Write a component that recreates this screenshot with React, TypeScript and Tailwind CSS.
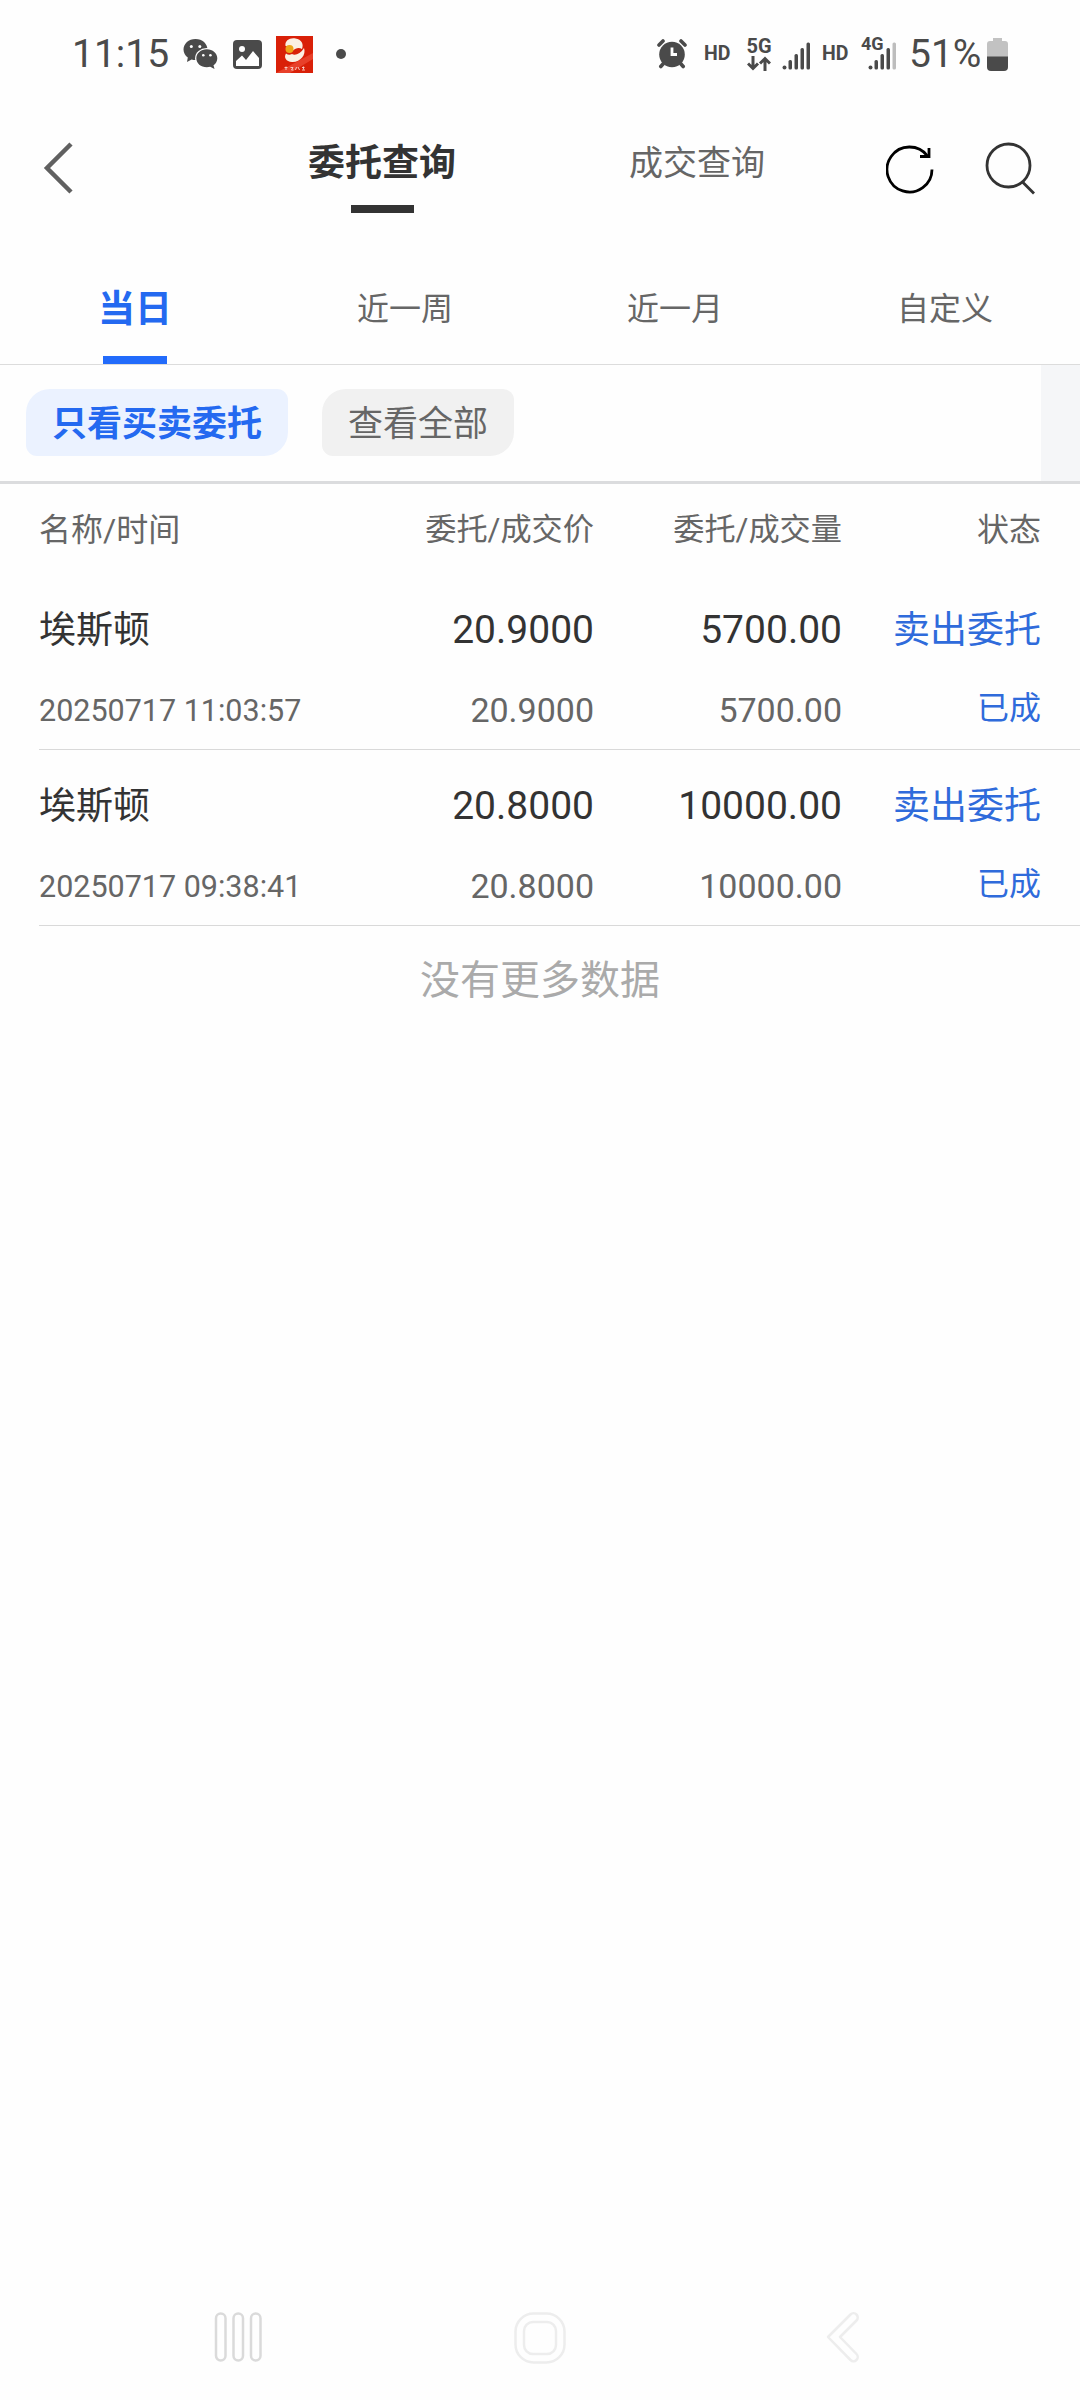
import { clsx } from 'clsx';

interface Order {
  name: string;
  time: string;
  price: string;
  dealPrice: string;
  amount: string;
  dealAmount: string;
  side: string;
  status: string;
}

const orders: Order[] = [
  {
    name: '埃斯顿',
    time: '20250717 11:03:57',
    price: '20.9000',
    dealPrice: '20.9000',
    amount: '5700.00',
    dealAmount: '5700.00',
    side: '卖出委托',
    status: '已成',
  },
  {
    name: '埃斯顿',
    time: '20250717 09:38:41',
    price: '20.8000',
    dealPrice: '20.8000',
    amount: '10000.00',
    dealAmount: '10000.00',
    side: '卖出委托',
    status: '已成',
  },
];

const ranges = ['当日', '近一周', '近一月', '自定义'];

function WeChatIcon() {
  return (
    <svg className="ml-[13px]" width="36" height="30" viewBox="0 0 36 30" fill="#4a4a4a">
      <path d="M12.5 0C5.600 0 0.500 4.700 0.500 10.500c0 3.300 1.700 6.100 4.300 8.100L4 23l4.600-2.600c1.300.4 2.600.6 3.900.6 6.900 0 12-4.700 12-10.500S19.400 0 12.500 0z" />
      <ellipse cx="23.800" cy="19.300" rx="11.700" ry="10.200" fill="#fff" />
      <path d="M23.800 10.200c-6 0-10.500 4-10.500 9s4.500 9 10.500 9c1.200 0 2.400-.2 3.400-.5l4.300 2.300-1-3.700c2.400-1.700 3.800-4.200 3.800-7.100 0-5-4.500-9-10.500-9z" />
      <circle cx="8.300" cy="7.500" r="1.500" fill="#fff" />
      <circle cx="16.800" cy="7.500" r="1.500" fill="#fff" />
      <circle cx="20.300" cy="16.300" r="1.300" fill="#fff" />
      <circle cx="27.400" cy="16.300" r="1.300" fill="#fff" />
    </svg>
  );
}

function PhotoIcon() {
  return (
    <svg className="ml-[14px]" width="29" height="29" viewBox="0 0 29 29">
      <rect width="29" height="29" rx="4" fill="#4a4a4a" />
      <circle cx="9" cy="9" r="3" fill="#fff" />
      <path d="M3 26v-5l6-5.500 4 4.500 7-9 6 7v8z" fill="#fff" />
    </svg>
  );
}

function BrokerIcon() {
  return (
    <svg className="ml-[14px]" width="37" height="37" viewBox="0 0 37 37">
      <rect width="37" height="37" fill="#d92008" />
      <path d="M0 37L37 17v6L14 37z" fill="#e8402a" />
      <path d="M9.500 10C8.500 4.500 14 1.500 19.500 2.500c6 1 8.500 5.500 6.500 10.500-3-2-6.500-1-9 1.500C15 11 12 9.500 9.500 10z" fill="#fbf0e4" />
      <path d="M28 12c2.500 7-4 14.500-12 14-6-.5-8.500-4.500-6-8.500 2 1.500 4 1.500 6 .5 3 2 8.500 0 12-6z" fill="#fbf0e4" />
      <circle cx="13.500" cy="13" r="4" fill="#eda41b" />
      <path
        d="M8.500 31.500h3M10 30.500v3.500M14.500 31.500h2.500l-1.500 2.500h2M20.500 31l-1 3M22 31l1.500 3M26 31.500h2.500M27.500 30.500v3M26 34h3"
        stroke="#f7d5cd"
        strokeWidth="0.900"
        fill="none"
      />
    </svg>
  );
}

function AlarmIcon() {
  return (
    <svg width="30" height="30" viewBox="0 0 30 30" fill="none" stroke="#4a4a4a" strokeWidth="3.600" strokeLinecap="round">
      <circle cx="15" cy="15.500" r="12.800" fill="#4a4a4a" stroke="none" />
      <path d="M2 6l4-4M28 6l-4-4" />
      <path d="M6 25l-2.200 2.500M24 25l2.200 2.500" />
      <path d="M15 8.500v7h5" stroke="#fff" strokeWidth="2.800" strokeLinecap="butt" />
    </svg>
  );
}

function SignalBars({ weak, className }: { weak?: boolean; className?: string }) {
  return (
    <svg className={className} width="29" height="28" viewBox="0 0 29 28" fill="#4a4a4a">
      <rect x="0.500" y="23.500" width="4" height="4" rx="2" />
      <rect x="6.500" y="18" width="3.500" height="9.500" rx="1.500" />
      <rect x="12.500" y="12" width="3.500" height="15.500" rx="1.500" />
      <rect x="18.500" y="6" width="3.500" height="21.500" rx="1.500" />
      <rect x="24.500" y="0.500" width="3.500" height="27" rx="1.500" fill={weak ? '#bdbdbd' : '#4a4a4a'} />
    </svg>
  );
}

function StatusBar() {
  return (
    <header className="flex h-[108px] items-center px-[72px] text-[#4a4a4a]">
      <span className="w-[98px] text-[39px] leading-none">11:15</span>
      <WeChatIcon />
      <PhotoIcon />
      <BrokerIcon />
      <span className="ml-[23px] h-[10px] w-[10px] rounded-full bg-[#4a4a4a]" />

      <div className="ml-auto flex items-center">
        <AlarmIcon />
        <span className="ml-[17px] w-[28px] text-[19.500px] leading-none font-bold">HD</span>
        <div className="ml-[14px] flex w-[26px] flex-col items-center pt-px">
          <span className="text-[20px] leading-[16px] font-bold">5G</span>
          <svg className="mt-[2px]" width="24" height="15" viewBox="0 0 24 15" fill="none" stroke="#4a4a4a" strokeWidth="3">
            <path d="M6 0v12M1 7.500l5 5 5-5M18 15V3M13 7.500l5-5 5 5" />
          </svg>
        </div>
        <SignalBars className="mt-[3px] ml-[10px]" />
        <span className="ml-[11px] w-[29px] text-[19.500px] leading-none font-bold">HD</span>
        <div className="relative ml-[10px] h-[34px] w-[38px]">
          <SignalBars weak className="absolute right-[2px] bottom-px" />
          <span className="absolute top-0 left-0 bg-[#fefefe] pr-px text-[18px] leading-[14px] font-bold">4G</span>
        </div>
        <span className="ml-[10px] w-[78px] text-[39px] leading-none">51%</span>
        <svg width="21" height="33" viewBox="0 0 21 33">
          <path d="M6 0h9v3h3a3 3 0 0 1 3 3v13H0V6a3 3 0 0 1 3-3h3z" fill="#c2c2c2" />
          <path d="M0 18.500h21V29a4 4 0 0 1-4 4H4a4 4 0 0 1-4-4z" fill="#4a4a4a" />
        </svg>
      </div>
    </header>
  );
}

function TitleBar() {
  return (
    <nav className="flex h-[148px] items-start">
      <button type="button" aria-label="返回" className="mt-[34px] ml-[43px]">
        <svg width="31" height="52" viewBox="0 0 31 52" fill="none" stroke="#606060" strokeWidth="4.500">
          <path d="M28 2L4 26l24 24" />
        </svg>
      </button>
      <div className="ml-[234px] flex w-[148px] flex-col items-center">
        <span className="mt-[28px] text-[37px] leading-[56px] font-bold whitespace-nowrap text-[#333]">委托查询</span>
        <span className="mt-[13px] h-2 w-[63px] bg-[#333]" />
      </div>
      <span className="mt-[27px] ml-[173px] w-[136px] text-[34px] leading-[56px] whitespace-nowrap text-[#666]">成交查询</span>
      <button type="button" aria-label="刷新" className="mt-[37px] ml-[121px]">
        <svg width="49" height="50" viewBox="0 0 49 50" fill="none" stroke="#000" strokeWidth="2.800">
          <path d="M46 24.500A22.500 22.500 0 1 1 41.500 11" />
          <path d="M34 11.500h9V3" />
        </svg>
      </button>
      <button type="button" aria-label="搜索" className="mt-[34px] ml-[50px]">
        <svg width="50" height="53" viewBox="0 0 50 53" fill="none" stroke="#333" strokeWidth="2.800">
          <circle cx="23.500" cy="23.500" r="21.500" />
          <path d="M37.500 40L49 51.500" />
        </svg>
      </button>
    </nav>
  );
}

function RangeTabs() {
  return (
    <div className="grid h-[109px] grid-cols-4 border-b border-[#dcdcdc]">
      {ranges.map((label, i) => (
        <div key={label} className="flex flex-col items-center">
          <span
            className={clsx(
              'h-[56px] leading-[56px]',
              i === 0 ? 'mt-[26px] text-[37px] font-bold text-[#2469f0]' : 'mt-[25px] text-[32px] text-[#666]'
            )}
          >
            {label}
          </span>
          {i === 0 && <span className="mt-auto h-2 w-16 bg-[#226bfb]" />}
        </div>
      ))}
    </div>
  );
}

function Filters() {
  return (
    <div className="flex h-[119px] border-b-[3px] border-[#dbdcde]">
      <div className="flex flex-1 items-start gap-[34px] pt-6 pl-[26px]">
        <button
          type="button"
          className="h-[67px] w-[262px] rounded-tl-3xl rounded-tr-[11px] rounded-br-3xl rounded-bl-[11px] bg-[#ebf2ff] pt-[5px] text-[35px] leading-[62px] font-bold text-[#2469f0]"
        >
          只看买卖委托
        </button>
        <button
          type="button"
          className="h-[67px] w-[192px] rounded-tl-3xl rounded-tr-[11px] rounded-br-3xl rounded-bl-[11px] bg-[#f1f1f1] pt-[5px] text-[35px] leading-[62px] text-[#666]"
        >
          查看全部
        </button>
      </div>
      <div className="w-[39px] bg-[#f5f6f8]" />
    </div>
  );
}

function OrderRow({ order }: { order: Order }) {
  return (
    <li className="ml-[39px] grid h-[176px] grid-cols-[300px_255px_248px_199px] grid-rows-[95px_60px] border-b border-[#d9d9d9] text-right text-[#666]">
      <span className="text-left text-[37px] leading-[114px] text-[#333]">{order.name}</span>
      <span className="text-[39px] leading-[112px] text-[#333]">{order.price}</span>
      <span className="text-[39px] leading-[112px] text-[#333]">{order.amount}</span>
      <span className="text-[37px] leading-[114px] text-[#2f6bdb]">{order.side}</span>
      <span className="text-left text-[30.500px] leading-[84px]">{order.time}</span>
      <span className="text-[34px] leading-[82px]">{order.dealPrice}</span>
      <span className="text-[34px] leading-[82px]">{order.dealAmount}</span>
      <span className="text-[32px] leading-[78px] text-[#2f6bdb]">{order.status}</span>
    </li>
  );
}

function SystemNav() {
  return (
    <footer className="mt-auto flex h-[125px] items-center pl-[214px]">
      <svg width="49" height="51" viewBox="0 0 49 51" fill="none" stroke="#dadada" strokeWidth="2.500">
        <rect x="2" y="1.500" width="9.500" height="47" rx="4.700" />
        <rect x="19.500" y="1.500" width="9.500" height="47" rx="4.700" />
        <rect x="37" y="1.500" width="9.500" height="47" rx="4.700" />
      </svg>
      <svg className="ml-[251px]" width="52" height="52" viewBox="0 0 52 52" fill="none" stroke="#ededed" strokeWidth="2.500">
        <rect x="1.500" y="1.500" width="49" height="49" rx="18" />
        <rect x="10" y="10" width="32" height="32" rx="9" />
      </svg>
      <svg className="ml-[260px]" width="34" height="51" viewBox="0 0 34 51" fill="none" stroke="#ededed" strokeWidth="2.500" strokeLinejoin="round">
        <path d="M2 25L24.500 2.500a4.200 4.200 0 0 1 6 6L14 25l16.500 17a4.200 4.200 0 0 1-6 6z" />
      </svg>
    </footer>
  );
}

export default function App() {
  return (
    <div className="flex h-[2400px] w-[1080px] flex-col overflow-hidden bg-[#fefefe] font-[Roboto,'Noto_Sans_CJK_SC',sans-serif]">
      <StatusBar />
      <TitleBar />
      <RangeTabs />
      <Filters />
      <div className="ml-[39px] grid h-[90px] grid-cols-[300px_255px_248px_199px] text-right text-[31.200px] leading-[92px] text-[#666]">
        <span className="text-left text-[32px]">名称/时间</span>
        <span>委托/成交价</span>
        <span>委托/成交量</span>
        <span className="text-[32px]">状态</span>
      </div>
      <ul>
        {orders.map((order) => (
          <OrderRow key={order.time} order={order} />
        ))}
      </ul>
      <p className="text-center text-[40px] leading-[109px] text-[#aaa]">没有更多数据</p>
      <SystemNav />
    </div>
  );
}
